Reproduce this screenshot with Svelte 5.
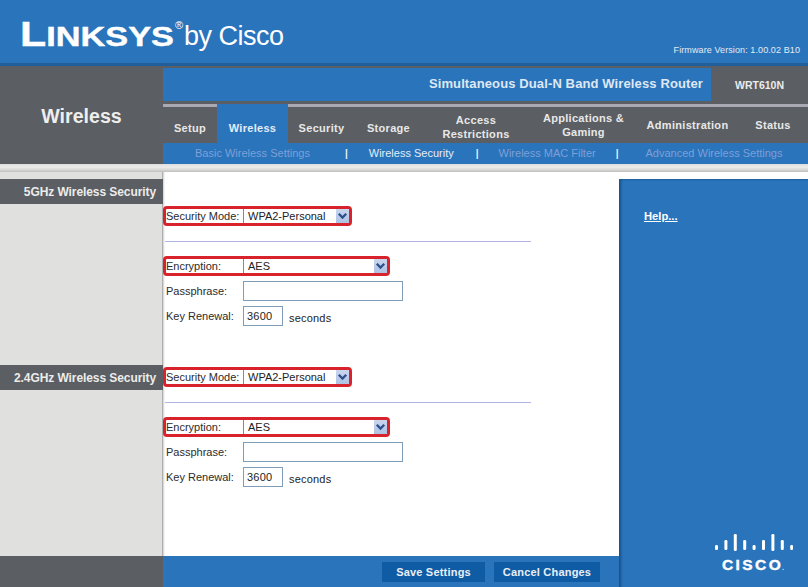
<script>
  const tabs = [
    { w: 54, lines: ['Setup'], cls: 'low' },
    { w: 71, lines: ['Wireless'], active: true, cls: 'low' },
    { w: 67, lines: ['Security'], cls: 'low' },
    { w: 67, lines: ['Storage'], cls: 'low' },
    { w: 108, lines: ['Access', 'Restrictions'], cls: 'mid' },
    { w: 107, lines: ['Applications &', 'Gaming'] },
    { w: 101, lines: ['Administration'] },
    { w: 70, lines: ['Status'] }
  ];
  const sections = [
    { title: '5GHz Wireless Security', second: false },
    { title: '2.4GHz Wireless Security', second: true }
  ];
  const bars = [
    [0, 12, 5], [9.4, 7, 10], [18.8, 1, 17], [28.2, 7, 10], [37.6, 12, 5],
    [47, 7, 10], [56.4, 1, 17], [65.8, 7, 10], [75.2, 12, 5]
  ];
</script>

{#snippet arrow()}
  <span class="arrow">
    <svg width="13" height="14" viewBox="0 0 13 14">
      <path d="M2.8 4.8 L6.5 8.6 L10.2 4.8" fill="none" stroke="#2c4f8a" stroke-width="2.3" />
    </svg>
  </span>
{/snippet}

<div class="page">
  <header class="top">
    <div class="logo">
      <span class="brand"><span class="bigl">L</span>INKSYS</span>
      <sup class="reg">®</sup>
      <span class="by">by Cisco</span>
    </div>
    <div class="firmware">Firmware Version: 1.00.02 B10</div>
  </header>

  <div class="band">
    <div class="area">Wireless</div>
    <div class="navcol">
      <div class="titlebar">
        <div class="product">Simultaneous Dual-N Band Wireless Router</div>
        <div class="model">WRT610N</div>
      </div>
      <nav class="tabs">
        {#each tabs as t}
          <div class="tab {t.cls ?? ''}" class:active={t.active} style="width:{t.w}px">
            {#each t.lines as l}<span>{l}</span>{/each}
          </div>
        {/each}
      </nav>
      <div class="subnav">
        <span class="sub s1">Basic Wireless Settings</span>
        <span class="bar b1">|</span>
        <span class="sub cur">Wireless Security</span>
        <span class="bar b2">|</span>
        <span class="sub">Wireless MAC Filter</span>
        <span class="bar b3">|</span>
        <span class="sub s4">Advanced Wireless Settings</span>
      </div>
    </div>
  </div>

  <div class="strip"></div>

  <div class="main">
    <div class="content">
      {#each sections as s}
        <section class="sec">
          <h2 class="sectitle">{s.title}</h2>
          <div class="fields" class:second={s.second}>
            <div class="boxed short">
              <span class="lab">Security Mode:</span>
              <span class="sel">WPA2-Personal</span>
              {@render arrow()}
            </div>
            <hr class="rule" />
            <div class="boxed long">
              <span class="lab">Encryption:</span>
              <span class="sel">AES</span>
              {@render arrow()}
            </div>
            <div class="row">
              <span class="lab">Passphrase:</span>
              <span class="input wide"></span>
            </div>
            <div class="row">
              <span class="lab">Key Renewal:</span>
              <span class="input small">3600</span>
              <span class="unit">seconds</span>
            </div>
          </div>
        </section>
      {/each}
    </div>
    <aside class="help"><span class="helplink">Help...</span></aside>
  </div>

  <footer class="foot">
    <div class="footleft"></div>
    <div class="footmid">
      <button class="btn save">Save Settings</button>
      <button class="btn cancel">Cancel Changes</button>
    </div>
    <div class="footright"></div>
    <div class="cisco">
      <svg width="78" height="18" viewBox="0 0 78 18">
        {#each bars as [x, y, h]}
          <rect x={x} y={y} width="3" height={h} rx="1.3" fill="#fff" />
        {/each}
      </svg>
      <span class="ciscoword">CISCO<i>.</i></span>
    </div>
  </footer>
</div>

<style>
  :global(body) { margin: 0; background: #fff; }
  .page {
    width: 808px; height: 587px; overflow: hidden; position: relative;
    display: flex; flex-direction: column;
    font-family: "Liberation Sans", Arial, sans-serif;
    color: #222;
  }
  .top {
    height: 66px; box-sizing: border-box; flex: none;
    background: #2a74bc; border-bottom: 3px solid #215f9c;
    display: flex; justify-content: space-between; align-items: flex-start;
  }
  .logo { margin: 14px 0 0 20px; color: #fff; display: flex; align-items: flex-start; height: 40px; position: relative; }
  .brand {
    display: block; font-weight: 700; font-size: 28px; line-height: 40px; width: 155px; white-space: nowrap;
    transform: scaleX(1.225); transform-origin: left center; -webkit-text-stroke: 0.4px #fff;
  }
  .bigl { font-size: 35px; }
  .reg { font-size: 11px; line-height: 11px; margin: 6px 0 0 0; width: 9px; font-weight: 400; }
  .by { font-size: 27px; letter-spacing: -0.5px; line-height: 40px; margin-top: 2px; }
  .firmware { font-size: 9px; color: #e4ebf3; margin: 45px 8px 0 0; letter-spacing: 0.1px; }

  .band { height: 98px; flex: none; background: #5b5e62; display: flex; }
  .area {
    width: 163px; flex: none; box-sizing: border-box; text-align: center; padding-top: 38px;
    color: #eee; font-size: 19.6px; font-weight: 700; line-height: 24px;
  }
  .navcol { flex: 1; display: flex; flex-direction: column; }
  .titlebar { height: 33px; margin-top: 2px; display: flex; flex: none; }
  .product {
    width: 548px; background: #2a74bc; color: #dfe8f2; font-weight: 700; font-size: 13px;
    letter-spacing: 0.12px; line-height: 31px; text-align: right; padding-right: 8px; box-sizing: border-box;
  }
  .model { flex: 1; color: #ececec; font-weight: 700; font-size: 10.5px; text-align: center; line-height: 35px; }
  .tabs { height: 39px; margin-top: 3px; display: flex; flex: none; }
  .tab {
    display: flex; flex-direction: column; align-items: center; justify-content: center;
    box-sizing: border-box; border-top: 3px solid #a9a9b3; color: #e8e8e8;
    font-weight: 700; font-size: 11px; letter-spacing: 0.3px; line-height: 14px; height: 39px;
  }
  .tab.low { padding-top: 6px; }
  .tab.mid { padding-top: 4px; }
  .tab.active { background: #2a74bc; border-top-color: #2a74bc; color: #e4ecf6; }
  .subnav {
    height: 21px; flex: none; background: #2a74bc; display: flex; align-items: center;
    font-size: 11px; line-height: 21px; white-space: nowrap;
  }
  .sub { color: #7f9fd6; }
  .sub.cur { color: #e6edf6; }
  .s1 { margin-left: 32px; }
  .bar { color: #e8eef6; font-weight: 700; margin: 0 21px; font-size: 10px; }
  .b1 { margin-left: 35px; }
  .b2 { margin-left: 22px; margin-right: 20px; }
  .b3 { margin-left: 20px; margin-right: 27px; }

  .strip {
    height: 8px; flex: none;
    background: linear-gradient(#dededc, #ececea 40%, #d2d2cf 80%, #bdbdba);
  }

  .main { flex: 1; display: flex; min-height: 0; background: #fff; }
  .content {
    flex: 1; display: flex; flex-direction: column; padding-top: 7px;
    background: linear-gradient(90deg, #e0e0de 0 162px, #8d8d8d 162px, #cfcfcf 163px, #fff 165px);
  }
  .sec { height: 186px; display: flex; flex: none; }
  .sectitle {
    width: 163px; height: 25px; margin: 0; box-sizing: border-box; flex: none;
    background: #5b5e62; color: #ececec; font-size: 12px; font-weight: 700; line-height: 26px;
    text-align: right; padding-right: 7px; letter-spacing: -0.08px; white-space: nowrap;
  }
  .fields { padding: 27px 0 0 0; display: flex; flex-direction: column; align-items: flex-start; }
  .fields.second { padding-top: 2px; }
  .boxed {
    height: 20px; box-sizing: border-box; border: 3px solid #d8232c; border-radius: 4px;
    display: flex; align-items: center; position: relative; background: #fff;
  }
  .boxed.short { width: 189px; }
  .boxed.long { width: 227px; }
  .lab { font-size: 11px; width: 77px; flex: none; color: #2b2b2b; }
  .row .lab { padding-left: 3px; width: 80px; box-sizing: border-box; }
  .sel {
    flex: 1; border-left: 1px solid #8a8a8a; height: 14px; line-height: 14px; font-size: 11px;
    padding-left: 4px; color: #222;
  }
  .arrow { width: 13px; height: 14px; flex: none; background: linear-gradient(#c9d6ef, #afc2e4); display: block; }
  .arrow svg { display: block; }
  .rule {
    width: 366px; height: 0; margin: 15px 0 14px 2px; border: 0; border-top: 1px solid #adb2e0;
  }
  .row { height: 20px; display: flex; align-items: center; margin-top: 5px; }
  .input {
    box-sizing: border-box; height: 20px; border: 1px solid #7f9db9; background: #fff;
    font-size: 11px; line-height: 18px; padding-left: 3px; letter-spacing: 0.2px;
  }
  .wide { width: 160px; }
  .small { width: 40px; }
  .unit { font-size: 11px; margin: 4px 0 0 6px; letter-spacing: 0.2px; }

  .help {
    width: 189px; flex: none; margin-top: 7px; box-sizing: border-box;
    background:
      linear-gradient(#1d5d9c, rgba(42, 116, 188, 0) 2px),
      linear-gradient(90deg, #174f8a, #2a74bc 4px);
    padding: 29px 0 0 25px; line-height: 14px;
  }
  .helplink { color: #fff; font-weight: 700; font-size: 11.2px; text-decoration: underline; }

  .foot { height: 31px; flex: none; display: flex; }
  .footleft { width: 163px; background: #5b5e62; }
  .footmid {
    width: 456px; background: #2a74bc; display: flex; justify-content: flex-end; align-items: center;
    gap: 9px; padding-right: 19px; box-sizing: border-box;
  }
  .footright { flex: 1; background: linear-gradient(90deg, #174f8a, #2a74bc 4px); }
  .btn {
    height: 20px; border: 0; background: #0f5ca4; color: #e9eef5; font-family: inherit;
    font-weight: 700; font-size: 11px; letter-spacing: 0.2px; padding: 0; margin-top: 1px;
  }
  .save { width: 103px; }
  .cancel { width: 106px; }
  .cisco {
    position: absolute; left: 715px; top: 533px; width: 78px; display: flex; flex-direction: column; align-items: flex-start; color: #fff;
  }
  .cisco svg { display: block; }
  .ciscoword {
    font-weight: 700; font-size: 15.5px; letter-spacing: 2.4px; line-height: 14px; margin: 7px 0 0 7px;
    white-space: nowrap; -webkit-text-stroke: 0.4px #fff;
  }
  .ciscoword i { font-size: 8px; font-style: normal; letter-spacing: 0; color: #cfe0f2; margin-left: -1px; -webkit-text-stroke: 0; }
</style>
